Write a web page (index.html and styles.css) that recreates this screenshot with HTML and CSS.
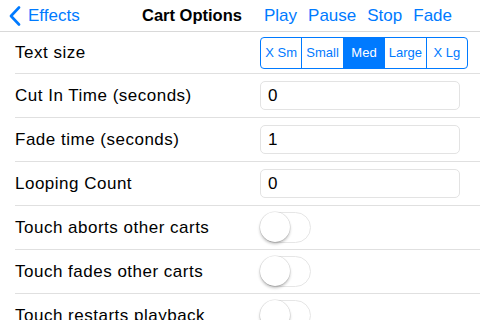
FILE: index.html
```html
<!DOCTYPE html>
<html lang="en">
<head>
    <meta charset="UTF-8">
    <meta name="viewport" content="width=device-width, initial-scale=1.0">
    <title>Cart Options</title>
    <link rel="stylesheet" href="styles.css">
</head>
<body>
    <nav class="navbar">
        <a class="back" href="#">
            <svg class="chevron" width="12" height="20" viewBox="0 0 12 20">
                <path d="M10 1.5 L2 10 L10 18.5" fill="none" stroke="#007aff" stroke-width="2.6" stroke-linecap="round" stroke-linejoin="round"/>
            </svg>
            <span>Effects</span>
        </a>
        <div class="title">Cart Options</div>
        <ul class="actions">
            <li><a href="#">Play</a></li>
            <li><a href="#">Pause</a></li>
            <li><a href="#">Stop</a></li>
            <li><a href="#">Fade</a></li>
        </ul>
    </nav>

    <div class="table">
        <div class="row first">
            <span class="label">Text size</span>
            <div class="segmented">
                <span>X Sm</span>
                <span>Small</span>
                <span class="selected">Med</span>
                <span>Large</span>
                <span>X Lg</span>
            </div>
        </div>
        <div class="row">
            <span class="label">Cut In Time (seconds)</span>
            <input class="field" type="text" value="0">
        </div>
        <div class="row">
            <span class="label">Fade time (seconds)</span>
            <input class="field" type="text" value="1">
        </div>
        <div class="row">
            <span class="label">Looping Count</span>
            <input class="field" type="text" value="0">
        </div>
        <div class="row">
            <span class="label">Touch aborts other carts</span>
            <span class="switch"><span class="knob"></span></span>
        </div>
        <div class="row">
            <span class="label">Touch fades other carts</span>
            <span class="switch"><span class="knob"></span></span>
        </div>
        <div class="row">
            <span class="label">Touch restarts playback</span>
            <span class="switch"><span class="knob"></span></span>
        </div>
    </div>
</body>
</html>
```

FILE: styles.css
```css
body {
    font-family: "Liberation Sans", Arial, sans-serif;
    background-color: white;
    color: black;
    margin: 0;
    padding: 0;
    width: 480px;
    height: 320px;
    overflow: hidden;
}

a {
    color: #007aff;
    text-decoration: none;
}

.navbar {
    height: 32px;
    box-sizing: border-box;
    border-bottom: 1px solid #d9d9d9;
    display: flex;
    align-items: center;
    position: relative;
    padding: 0 0 0 9px;
}

.back {
    display: flex;
    align-items: center;
    font-size: 17px;
}

.back span {
    margin-left: 7px;
}

.chevron {
    display: block;
}

.title {
    position: absolute;
    left: 142px;
    top: 0;
    line-height: 31px;
    font-size: 16.5px;
    font-weight: bold;
}

.actions {
    list-style-type: none;
    margin: 0 0 0 auto;
    padding: 0 28px 0 0;
    display: flex;
    gap: 11px;
}

.actions li a {
    font-size: 17px;
}

.table {
    display: flex;
    flex-direction: column;
}

.row {
    height: 44px;
    display: flex;
    align-items: center;
    margin-left: 15px;
    border-bottom: 1px solid #e0e0e0;
    box-sizing: border-box;
}

.row.first {
    height: 42px;
}

.label {
    font-size: 17px;
    letter-spacing: 0.5px;
    width: 245px;
    flex-shrink: 0;
}

.segmented {
    display: flex;
    border: 1px solid #007aff;
    border-radius: 4px;
    height: 32px;
    box-sizing: border-box;
    width: 208px;
    overflow: hidden;
}

.segmented span {
    flex: 1;
    display: flex;
    align-items: center;
    justify-content: center;
    font-size: 13px;
    color: #007aff;
    border-left: 1px solid #007aff;
}

.segmented span:first-child {
    border-left: none;
}

.segmented .selected {
    background-color: #007aff;
    color: white;
}

.field {
    width: 200px;
    height: 29px;
    box-sizing: border-box;
    border: 1px solid #e3e3e3;
    border-radius: 5px;
    padding: 0 7px;
    font-family: "Liberation Sans", Arial, sans-serif;
    font-size: 17px;
    color: black;
    outline: none;
}

.switch {
    width: 51px;
    height: 31px;
    box-sizing: border-box;
    border: 1.5px solid #e6e6e6;
    border-radius: 16px;
    position: relative;
    background-color: white;
}

.knob {
    position: absolute;
    left: -1px;
    top: -1px;
    width: 30px;
    height: 30px;
    border-radius: 50%;
    background-color: white;
    box-shadow: 0 2px 3px rgba(0, 0, 0, 0.25), 0 0 0 0.5px rgba(0, 0, 0, 0.12);
}
```
